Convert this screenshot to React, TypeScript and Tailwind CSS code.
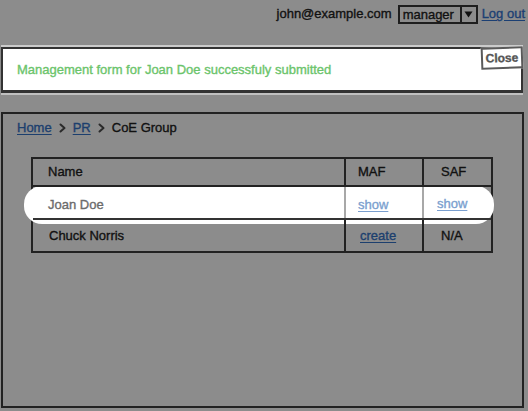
import React from "react";

const font = { fontFamily: '"Liberation Sans", Arial, sans-serif' };

function Chevron() {
  return (
    <svg width="7" height="10" viewBox="0 0 7 10" className="shrink-0">
      <path d="M1.5 1.5 L5.5 5 L1.5 8.5" fill="none" stroke="#2a2a2a" strokeWidth="2" strokeLinecap="round" strokeLinejoin="round" />
    </svg>
  );
}

export default function App() {
  return (
    <div
      className="w-[528px] h-[411px] bg-[#8c8c8c] overflow-hidden flex flex-col text-[13px] text-[#111] [-webkit-text-stroke:0.35px]"
      style={font}
    >
      {/* top bar */}
      <div className="h-[27px] flex items-center justify-end pr-[3px] pt-[1px]">
        <span className="leading-[16px]">john@example.com</span>
        <div className="ml-[6px] flex h-[19px] w-[80px] border-2 border-[#1e1e1e]">
          <span className="flex-1 pl-[3px] leading-[15px]">manager</span>
          <div className="w-[16px] border-l-2 border-[#1e1e1e] flex items-center justify-center">
            <svg width="9" height="7" viewBox="0 0 9 7">
              <polygon points="0.5,0.5 8.5,0.5 4.5,6.5" fill="#111" />
            </svg>
          </div>
        </div>
        <a className="ml-[4px] text-[#1b3f73] underline underline-offset-2 leading-[16px]">Log out</a>
      </div>

      {/* notification */}
      <div className="mt-[20px] ml-[1px] w-[522px] h-[46px] relative bg-white border-2 border-b-[3px] border-[#333] flex items-center pl-[14px] shadow-[0_-2px_0_rgba(255,255,255,0.55),0_2px_0_rgba(255,255,255,0.45)]">
        <span className="text-[#6bc46b] leading-[16px]">Management form for Joan Doe successfuly submitted</span>
        <div className="absolute top-[-2px] right-[-2px] w-[42px] h-[22px] bg-white border-2 border-[#5a5a5a] flex items-center justify-center rotate-[-2deg]">
          <span className="text-[12px] font-semibold text-[#555] leading-[14px]">Close</span>
        </div>
      </div>

      {/* panel */}
      <div className="mt-[19px] ml-[1px] w-[523px] h-[296px] border-2 border-[#222] pt-[6px] pl-[14px]">
        <div className="h-[16px] flex items-center gap-[7px] leading-[16px]">
          <a className="text-[#1c3f6e] underline underline-offset-2">Home</a>
          <Chevron />
          <a className="text-[#1c3f6e] underline underline-offset-2">PR</a>
          <Chevron />
          <span>CoE Group</span>
        </div>

        <div className="relative mt-[21px] ml-[14px] w-[462px] border-2 border-[#222]">
          {/* highlight */}
          <div className="absolute z-10 left-[-9px] top-[27px] w-[470px] h-[38px] bg-white rounded-[18px] pointer-events-none" />

          <div className="relative z-20 grid grid-cols-[311px_78px_69px] h-[28px] border-b-2 border-[#222]">
            <div className="flex items-center pl-[15px]">Name</div>
            <div className="flex items-center pl-[12px] border-l-2 border-[#222]">MAF</div>
            <div className="flex items-center pl-[17px] border-l-2 border-[#222]">SAF</div>
          </div>

          <div className="relative z-20 grid grid-cols-[311px_78px_69px] h-[33px] border-b-2 border-[#333]">
            <div className="flex items-center pl-[15px] pt-[4px] text-[#6b6b6b]">Joan Doe</div>
            <div className="flex items-center pl-[12px] pt-[4px] border-l-2 border-[#a8a8a8]">
              <a className="text-[#7a9fcf] underline underline-offset-2">show</a>
            </div>
            <div className="flex items-center pl-[13px] pt-[2px] border-l-2 border-[#a8a8a8]">
              <a className="text-[#7a9fcf] underline underline-offset-2">show</a>
            </div>
          </div>

          <div className="relative z-20 grid grid-cols-[311px_78px_69px] h-[31px]">
            <div className="flex items-center pl-[16px]">Chuck Norris</div>
            <div className="flex items-center pl-[14px] border-l-2 border-[#222]">
              <a className="text-[#1c3f6e] underline underline-offset-2">create</a>
            </div>
            <div className="flex items-center pl-[17px] border-l-2 border-[#222]">N/A</div>
          </div>
        </div>
      </div>
    </div>
  );
}
